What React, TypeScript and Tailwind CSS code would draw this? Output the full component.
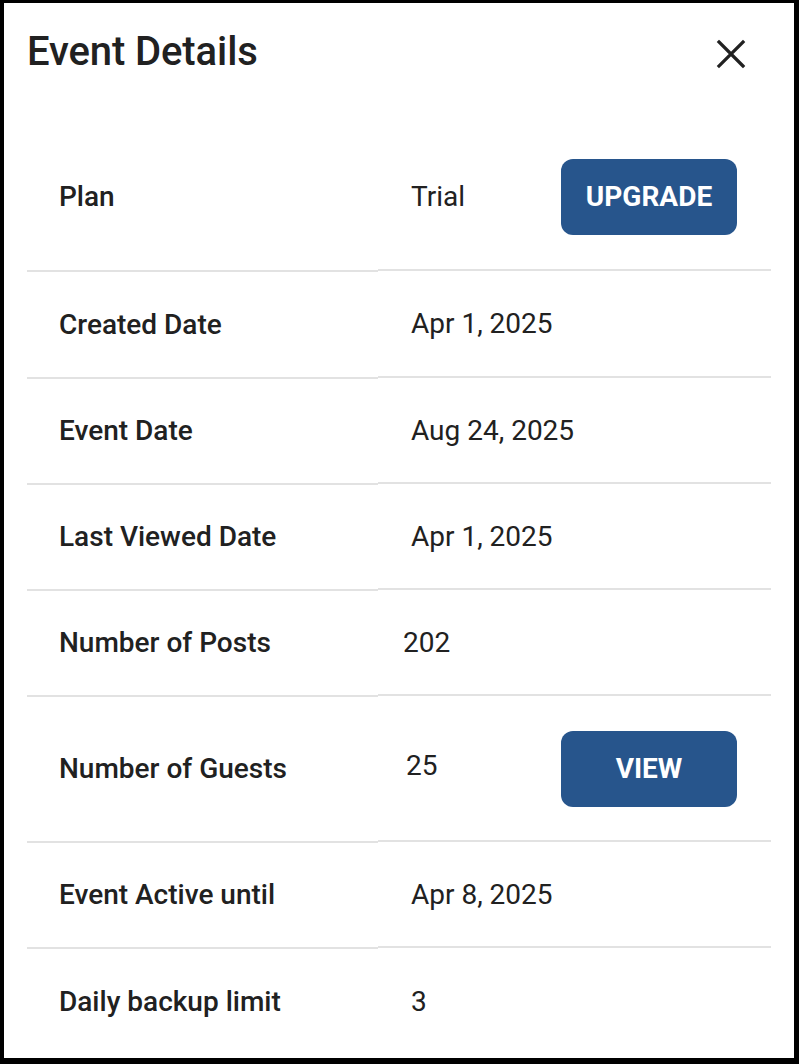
import React from "react";

type Row = {
    label: string;
    value: string;
    valueClass?: string;
    action?: string;
    rowH: string;
    cellH: string;
};

const rows: Row[] = [
    { label: "Plan", value: "Trial", action: "UPGRADE", rowH: "h-[148px]", cellH: "h-[147px]" },
    { label: "Created Date", value: "Apr 1, 2025", rowH: "h-[107px]", cellH: "h-[106px]" },
    { label: "Event Date", value: "Aug 24, 2025", rowH: "h-[106px]", cellH: "h-[105px]" },
    { label: "Last Viewed Date", value: "Apr 1, 2025", rowH: "h-[106px]", cellH: "h-[105px]" },
    { label: "Number of Posts", value: "202", valueClass: "pl-[25px]", rowH: "h-[106px]", cellH: "h-[105px]" },
    { label: "Number of Guests", value: "25", valueClass: "pl-[28px] -mt-[6px]", action: "VIEW", rowH: "h-[146px]", cellH: "h-[145px]" },
    { label: "Event Active until", value: "Apr 8, 2025", rowH: "h-[106px]", cellH: "h-[105px]" },
    { label: "Daily backup limit", value: "3", rowH: "h-[106px]", cellH: "h-[105px]" },
];

export default function App() {
    return (
        <div className="w-[799px] h-[1064px] bg-white border-black border-l-4 border-t-[3px] border-r-[5px] border-b-[6px] font-['Roboto',sans-serif] text-[#212121]">
            {/* Header */}
            <div className="flex items-center justify-between h-[98px] pl-[23px] pr-[48px]">
                <h1 className="text-[40px] font-medium tracking-[-0.1px]">Event Details</h1>
                <button className="text-[#212121] mt-[3px]">
                    <svg width="30" height="30" viewBox="0 0 30 30" fill="none" stroke="currentColor" strokeWidth="3.2" strokeLinecap="square">
                        <path d="M3 3 L27 27 M27 3 L3 27" />
                    </svg>
                </button>
            </div>

            {/* Details table */}
            <div className="mt-[23px] mx-[23px]">
                {rows.map((row, i) => {
                    const last = i === rows.length - 1;
                    const line = last ? "" : "border-b-2 border-[#e2e2e2]";
                    return (
                        <div key={row.label} className={`flex items-start ${row.rowH}`}>
                            <div className={`w-[351px] h-full flex items-center pl-[32px] ${line}`}>
                                <span className="text-[28px] font-medium">{row.label}</span>
                            </div>
                            <div className={`flex-1 ${row.cellH} flex items-center justify-between pr-[34px] ${line}`}>
                                <span className={`text-[28px] ${row.valueClass ?? "pl-[33px]"}`}>{row.value}</span>
                                {row.action && (
                                    <button className="w-[176px] h-[76px] rounded-[12px] bg-[#27558c] text-white text-[28px] font-bold">
                                        {row.action}
                                    </button>
                                )}
                            </div>
                        </div>
                    );
                })}
            </div>
        </div>
    );
}
